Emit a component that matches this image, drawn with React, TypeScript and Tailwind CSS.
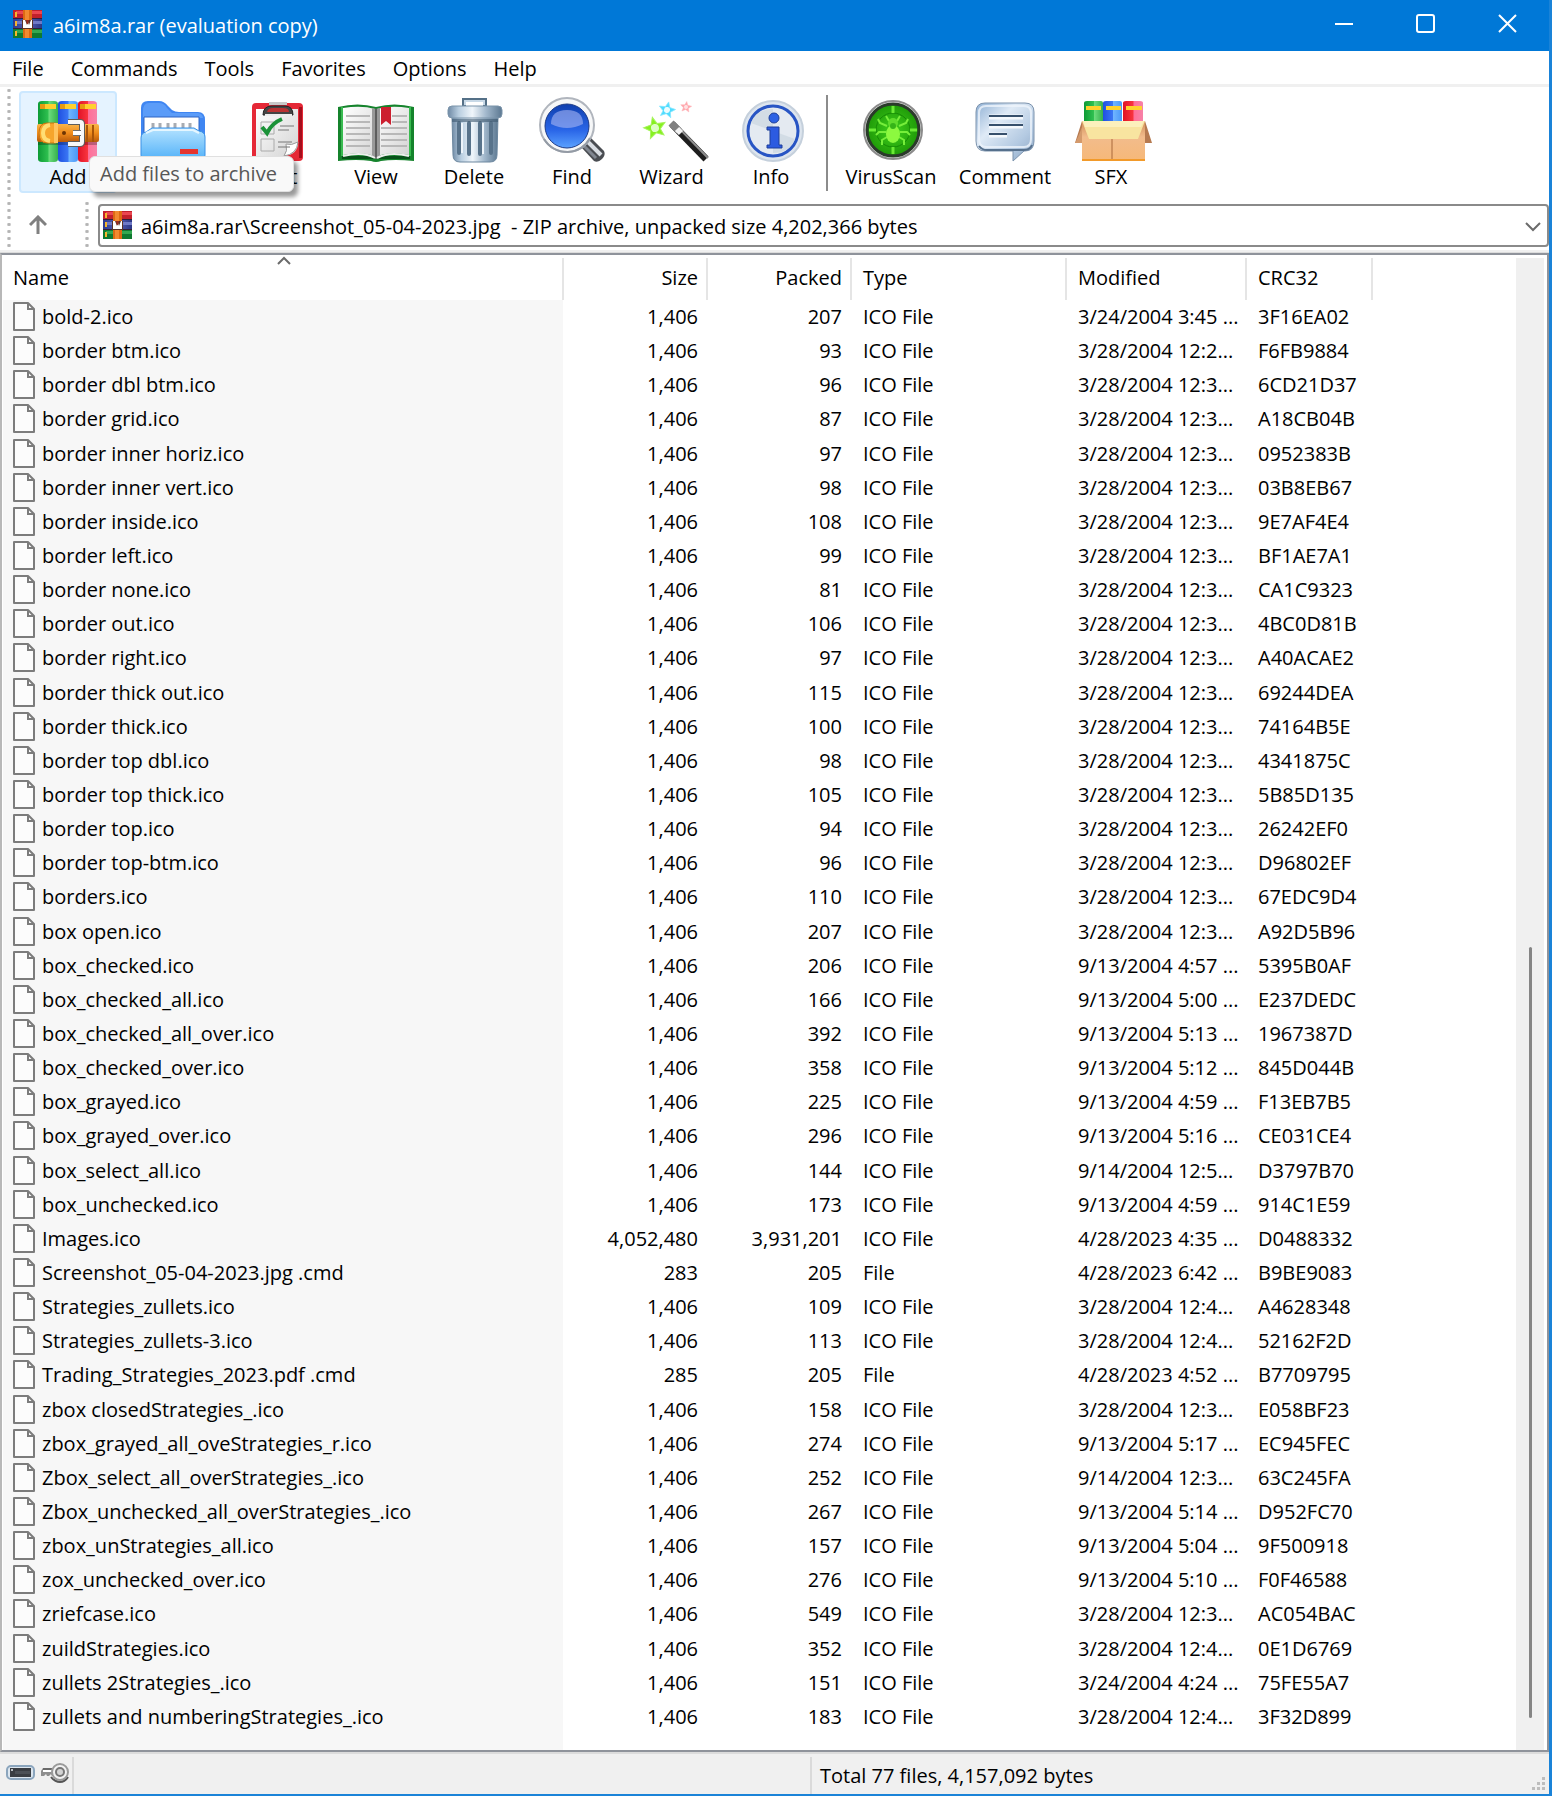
import { useState } from 'react';
import type { ReactNode } from 'react';

interface ArchiveFile {
  name: string;
  size: string;
  packed: string;
  type: string;
  modified: string;
  crc: string;
}

const ICO = 'ICO File';

const file = (
  name: string,
  packed: string,
  modified: string,
  crc: string,
  size = '1,406',
  type = ICO
): ArchiveFile => ({ name, size, packed, type, modified, crc });

const FILES: ArchiveFile[] = [
  file('bold-2.ico', '207', '3/24/2004 3:45 ...', '3F16EA02'),
  file('border btm.ico', '93', '3/28/2004 12:2...', 'F6FB9884'),
  file('border dbl btm.ico', '96', '3/28/2004 12:3...', '6CD21D37'),
  file('border grid.ico', '87', '3/28/2004 12:3...', 'A18CB04B'),
  file('border inner horiz.ico', '97', '3/28/2004 12:3...', '0952383B'),
  file('border inner vert.ico', '98', '3/28/2004 12:3...', '03B8EB67'),
  file('border inside.ico', '108', '3/28/2004 12:3...', '9E7AF4E4'),
  file('border left.ico', '99', '3/28/2004 12:3...', 'BF1AE7A1'),
  file('border none.ico', '81', '3/28/2004 12:3...', 'CA1C9323'),
  file('border out.ico', '106', '3/28/2004 12:3...', '4BC0D81B'),
  file('border right.ico', '97', '3/28/2004 12:3...', 'A40ACAE2'),
  file('border thick out.ico', '115', '3/28/2004 12:3...', '69244DEA'),
  file('border thick.ico', '100', '3/28/2004 12:3...', '74164B5E'),
  file('border top dbl.ico', '98', '3/28/2004 12:3...', '4341875C'),
  file('border top thick.ico', '105', '3/28/2004 12:3...', '5B85D135'),
  file('border top.ico', '94', '3/28/2004 12:3...', '26242EF0'),
  file('border top-btm.ico', '96', '3/28/2004 12:3...', 'D96802EF'),
  file('borders.ico', '110', '3/28/2004 12:3...', '67EDC9D4'),
  file('box open.ico', '207', '3/28/2004 12:3...', 'A92D5B96'),
  file('box_checked.ico', '206', '9/13/2004 4:57 ...', '5395B0AF'),
  file('box_checked_all.ico', '166', '9/13/2004 5:00 ...', 'E237DEDC'),
  file('box_checked_all_over.ico', '392', '9/13/2004 5:13 ...', '1967387D'),
  file('box_checked_over.ico', '358', '9/13/2004 5:12 ...', '845D044B'),
  file('box_grayed.ico', '225', '9/13/2004 4:59 ...', 'F13EB7B5'),
  file('box_grayed_over.ico', '296', '9/13/2004 5:16 ...', 'CE031CE4'),
  file('box_select_all.ico', '144', '9/14/2004 12:5...', 'D3797B70'),
  file('box_unchecked.ico', '173', '9/13/2004 4:59 ...', '914C1E59'),
  file('Images.ico', '3,931,201', '4/28/2023 4:35 ...', 'D0488332', '4,052,480'),
  file('Screenshot_05-04-2023.jpg .cmd', '205', '4/28/2023 6:42 ...', 'B9BE9083', '283', 'File'),
  file('Strategies_zullets.ico', '109', '3/28/2004 12:4...', 'A4628348'),
  file('Strategies_zullets-3.ico', '113', '3/28/2004 12:4...', '52162F2D'),
  file('Trading_Strategies_2023.pdf .cmd', '205', '4/28/2023 4:52 ...', 'B7709795', '285', 'File'),
  file('zbox closedStrategies_.ico', '158', '3/28/2004 12:3...', 'E058BF23'),
  file('zbox_grayed_all_oveStrategies_r.ico', '274', '9/13/2004 5:17 ...', 'EC945FEC'),
  file('Zbox_select_all_overStrategies_.ico', '252', '9/14/2004 12:3...', '63C245FA'),
  file('Zbox_unchecked_all_overStrategies_.ico', '267', '9/13/2004 5:14 ...', 'D952FC70'),
  file('zbox_unStrategies_all.ico', '157', '9/13/2004 5:04 ...', '9F500918'),
  file('zox_unchecked_over.ico', '276', '9/13/2004 5:10 ...', 'F0F46588'),
  file('zriefcase.ico', '549', '3/28/2004 12:3...', 'AC054BAC'),
  file('zuildStrategies.ico', '352', '3/28/2004 12:4...', '0E1D6769'),
  file('zullets 2Strategies_.ico', '151', '3/24/2004 4:24 ...', '75FE55A7'),
  file('zullets and numberingStrategies_.ico', '183', '3/28/2004 12:4...', '3F32D899'),
];

const MENU = ['File', 'Commands', 'Tools', 'Favorites', 'Options', 'Help'];

/* Gradients shared by all toolbar drawings */
function Gradients() {
  return (
    <svg width="0" height="0" className="absolute" aria-hidden="true">
      <defs>
        <linearGradient id="bookGreen">
          <stop offset="0" stopColor="#0d9a35" />
          <stop offset=".5" stopColor="#2fc050" />
          <stop offset=".55" stopColor="#6bdc7c" />
          <stop offset="1" stopColor="#35b04c" />
        </linearGradient>
        <linearGradient id="bookBlue">
          <stop offset="0" stopColor="#1f4fe0" />
          <stop offset=".5" stopColor="#3a76f4" />
          <stop offset=".55" stopColor="#6fb4ff" />
          <stop offset="1" stopColor="#4a98f8" />
        </linearGradient>
        <linearGradient id="bookRed">
          <stop offset="0" stopColor="#e01226" />
          <stop offset=".5" stopColor="#f8343e" />
          <stop offset=".55" stopColor="#ff6f98" />
          <stop offset="1" stopColor="#f782a8" />
        </linearGradient>
        <linearGradient id="belt" x1="0" y1="0" x2="0" y2="1">
          <stop offset="0" stopColor="#f9b54a" />
          <stop offset=".5" stopColor="#f08c1c" />
          <stop offset="1" stopColor="#b8590a" />
        </linearGradient>
        <linearGradient id="folderFront" x1="0" y1="0" x2="0" y2="1">
          <stop offset="0" stopColor="#b4e2ff" />
          <stop offset="1" stopColor="#4fb0f8" />
        </linearGradient>
        <linearGradient id="paper" x1="0" y1="0" x2="1" y2="1">
          <stop offset="0" stopColor="#ffffff" />
          <stop offset="1" stopColor="#d4d4d4" />
        </linearGradient>
        <linearGradient id="steel">
          <stop offset="0" stopColor="#6f8aa5" />
          <stop offset=".2" stopColor="#b9cee0" />
          <stop offset=".45" stopColor="#f0f6fb" />
          <stop offset=".7" stopColor="#a3b9cd" />
          <stop offset="1" stopColor="#5c7891" />
        </linearGradient>
        <linearGradient id="lens" x1="0" y1="0" x2="0" y2="1">
          <stop offset="0" stopColor="#0f3fae" />
          <stop offset=".6" stopColor="#2a66e8" />
          <stop offset="1" stopColor="#5ba2ff" />
        </linearGradient>
        <linearGradient id="bubble" x1="0" y1="0" x2="1" y2="1">
          <stop offset="0" stopColor="#8fb0d4" />
          <stop offset=".35" stopColor="#dfeaf6" />
          <stop offset=".7" stopColor="#b4cae2" />
          <stop offset="1" stopColor="#8ba5c2" />
        </linearGradient>
        <radialGradient id="virus">
          <stop offset="0" stopColor="#3fd01c" />
          <stop offset="1" stopColor="#1f9a08" />
        </radialGradient>
        <linearGradient id="cardboard" x1="0" y1="0" x2="0" y2="1">
          <stop offset="0" stopColor="#d08d58" />
          <stop offset=".4" stopColor="#f2bc8c" />
          <stop offset="1" stopColor="#f6b878" />
        </linearGradient>
        <linearGradient id="winBlue">
          <stop offset="0" stopColor="#2e3a8e" />
          <stop offset=".5" stopColor="#5560b8" />
          <stop offset="1" stopColor="#2b3684" />
        </linearGradient>
      </defs>
    </svg>
  );
}

function Drawing({ children }: { children: ReactNode }) {
  return (
    <svg width="76" height="64" viewBox="0 0 76 64" className="overflow-visible" aria-hidden="true">
      {children}
    </svg>
  );
}

function BooksIcon() {
  return (
    <Drawing>
      <path d="M8 5q0-3 4-3h12q4 0 4 3v55q0 3-4 3H12q-4 0-4-3z" fill="url(#bookGreen)" />
      <path d="M28 5q0-3 4-3h12q4 0 4 3v55q0 3-4 3H32q-4 0-4-3z" fill="url(#bookBlue)" />
      <path d="M48 5q0-3 4-3h11q4 0 4 3v55q0 3-4 3H52q-4 0-4-3z" fill="url(#bookRed)" />
      <path d="M10 5h16v5H10zM30 5h16v5H30zM50 5h16v5H50z" fill="#ffd02e" />
      <path d="M10 5h5v5h-5zM30 5h5v5h-5zM50 5h5v5h-5z" fill="#e89a10" />
      <path d="M8 43h20v3H8zM28 43h20v3H28zM48 43h19v3H48z" fill="#000" opacity=".25" />
      <rect x="7" y="25" width="62" height="18" rx="2" fill="url(#belt)" />
      <path d="M17 24q-8 0-8 10t8 10h9V24z" fill="#f6a52c" stroke="#c87410" />
      <path d="M20 26q-7 1-7 8t7 8" fill="none" stroke="#ffdd74" strokeWidth="4" />
      <path d="M24 24h4v20h-4z" fill="#ffc460" />
      <circle cx="34" cy="34" r="2" fill="#6d3504" />
      <path d="M38 23h12q2 0 2 2v18q0 2-2 2H38" fill="none" stroke="#5d5d5d" strokeWidth="6" />
      <path d="M38 23h12q2 0 2 2v18q0 2-2 2H38" fill="none" stroke="#f7f7f7" strokeWidth="4" />
      <path d="M43 34h8" stroke="#6e6e6e" strokeWidth="6" />
      <path d="M43 34h8" stroke="#fff" strokeWidth="4" />
      <path d="M57 26v17M63 26v17" stroke="#a85408" strokeWidth="2" />
    </Drawing>
  );
}

function FolderIcon() {
  return (
    <Drawing>
      <path d="M6 56V9q0-7 7-7h11q5 0 9 5l4 4q3 2 7 2h19q7 0 7 8v35z" fill="#3f86f2" />
      <path d="M8 12q0-8 6-8h10q5 0 8 5l5 5h26q5 1 5 5H8z" fill="#5b9cf8" />
      <path d="M9 18h55v26H9z" fill="#fff" stroke="#2e64c4" />
      <path d="M18 24v8M25 24v8M33 24v8M40 24v8M48 24v8M55 24v8" stroke="#a8acb2" strokeWidth="3" />
      <path d="M6 39q0-5 5-6l6-4h42l5 3q6 1 6 6v18q0 6-6 6H12q-6 0-6-6z" fill="url(#folderFront)" stroke="#3a91e6" />
      <path d="M11 34l7-3h40l6 3" fill="none" stroke="#e5f6ff" strokeWidth="2" />
      <path d="M45 50h18v5H45z" fill="#e5352f" />
    </Drawing>
  );
}

function ClipboardIcon() {
  return (
    <Drawing>
      <rect x="12" y="4" width="51" height="58" rx="4" fill="#e52836" />
      <path d="M59 8h3v51h-3z" fill="#a50e1c" />
      <path d="M16 10h42v33q0 13-14 14H16z" fill="url(#paper)" />
      <path d="M58 43q-7 4-12 2 2 7-2 12 13-2 14-14z" fill="#fff" stroke="#9a9a9a" />
      <path d="M23 16q0-9 9-9h13q8 0 8 9z" fill="#444" stroke="#222" />
      <path d="M27 13q1-4 6-4h10q6 0 6 4z" fill="#b33" />
      <path d="M29 3h18v3H29z" fill="#c8c8c8" />
      <path d="M25 16h27" stroke="#eee" strokeWidth="2" />
      <path d="M21 23h13v12H21zM21 40h13v12H21z" fill="none" stroke="#aaa" />
      <path d="M22 28l5 6q5-10 15-14" fill="none" stroke="#1b9238" strokeWidth="4" />
      <path d="M40 27h14M38 31h11M38 43h14M38 48h12" stroke="#777" />
    </Drawing>
  );
}

function BookIcon() {
  return (
    <Drawing>
      <path d="M0 8q20-5 38 0 18-5 38 0v54q-20-2-33 0-5 2-10 0-14-2-33 0z" fill="#15832c" />
      <path d="M3 8h2v49H3zM71 8h2v49h-2z" fill="#39ba50" />
      <path d="M4 57h68v3H4z" fill="#075219" />
      <path d="M5 9q19-3 32 1v47Q23 52 5 56z" fill="url(#paper)" />
      <path d="M39 10q14-4 32-1v47q-18-4-32 1z" fill="url(#paper)" />
      <path d="M34 9l4 1 4-1v48l-4 3-4-3z" fill="#999" />
      <path d="M38 10v49" stroke="#222" />
      <path d="M5 57q20-5 32 2M39 59q13-7 32-2" fill="none" stroke="#eee" strokeWidth="2" />
      <path
        d="M8 17h24M8 23h24M8 29h24M8 35h24M8 41h24M8 47h24M54 17h15M54 23h15M43 29h26M43 35h26M43 41h26M43 47h26"
        stroke="#b8b8b8"
        strokeWidth="2"
      />
      <path d="M43 8h10v18l-5-4-5 4z" fill="#cc1f2f" />
    </Drawing>
  );
}

function TrashIcon() {
  return (
    <Drawing>
      <path d="M28 8V1h21v7" fill="none" stroke="#547087" strokeWidth="4" />
      <path d="M29 6V2h19v4" fill="none" stroke="#c8d9e7" strokeWidth="2" />
      <path d="M16 18h46l-1 38q0 7-7 7H24q-7 0-7-7z" fill="url(#steel)" stroke="#6c879f" />
      <path d="M23 24v30M33 24v31M44 24v31M55 24v30" stroke="#58738b" strokeWidth="4" strokeLinecap="round" />
      <path d="M26 24v30M36 24v31M47 24v31" stroke="#edf4fa" strokeWidth="2" />
      <rect x="12" y="7" width="54" height="12" rx="4" fill="url(#steel)" stroke="#7b94aa" />
      <path d="M16 20h46v3H16z" fill="#3e586f" opacity=".6" />
    </Drawing>
  );
}

function FindIcon() {
  return (
    <Drawing>
      <path d="M50 43l6-5 14 14q2 4-2 8t-8 2L48 49z" fill="#4a4d52" />
      <path d="M53 42l14 14" stroke="#d8dce2" strokeWidth="4" />
      <path d="M50 47l12 12" stroke="#808690" strokeWidth="3" />
      <circle cx="33" cy="26" r="27" fill="#f6f7f8" stroke="#b0b5bd" strokeWidth="2" />
      <path d="M10 40q8 13 24 13 15-1 22-14" fill="none" stroke="#949ba5" strokeWidth="2" />
      <circle cx="33" cy="27" r="22" fill="url(#lens)" stroke="#1c3a86" />
      <path d="M17 25q0-14 16-14t16 14q-16 8-32 0z" fill="#a7b6f4" opacity=".6" />
    </Drawing>
  );
}

const STAR = 'M0-11L3-4 11-3 5 2 7 9 0 5-7 9-5 2-11-3-3-4z';

function WizardIcon() {
  return (
    <Drawing>
      <g transform="translate(21 29) rotate(-14)">
        <path d={STAR} fill="#86f020" stroke="#a6f45c" />
        <circle r="4" fill="#dcffc4" />
      </g>
      <g transform="translate(33 11) rotate(12) scale(.75)">
        <path d={STAR} fill="#4fdcff" stroke="#8ae8ff" />
        <circle r="4" fill="#ecfdff" />
      </g>
      <g transform="translate(52 8) rotate(8) scale(.5)">
        <path d={STAR} fill="#ffa6ac" stroke="#ffb4b8" />
        <circle r="4" fill="#ffe2e4" />
      </g>
      <path d="M38 25l34 35" stroke="#1e1e1e" strokeWidth="7" />
      <path d="M41 25l33 34" stroke="#8f8f8f" strokeWidth="2" />
      <path d="M37 24l8 8" stroke="#808080" strokeWidth="7" />
      <path d="M43 30l4 4" stroke="#f2f2f2" strokeWidth="6" />
    </Drawing>
  );
}

function InfoIcon() {
  return (
    <Drawing>
      <circle cx="40" cy="32" r="30" fill="#dde5ee" stroke="#c5d0dc" strokeWidth="2" />
      <circle cx="40" cy="32" r="25" fill="#e4eaf1" stroke="#2855c4" strokeWidth="3" />
      <path d="M40 32L18 24q5-14 22-14zM40 32l22 8q-5 14-22 14z" fill="#cbd5e0" opacity=".7" />
      <circle cx="41" cy="19" r="5" fill="#2c62e4" stroke="#1c3f9a" />
      <path d="M34 28h12v18h3v3H34v-3h3V31h-3z" fill="#2c5be0" stroke="#1c3f9a" />
    </Drawing>
  );
}

function VirusIcon() {
  return (
    <Drawing>
      <circle cx="40" cy="31" r="29" fill="#e8e8e8" stroke="#8b8b8b" strokeWidth="2" />
      <circle cx="40" cy="31" r="26" fill="url(#virus)" stroke="#2b3a2b" strokeWidth="3" />
      <circle cx="40" cy="31" r="17" fill="none" stroke="#158a05" />
      <path d="M40 7v7M40 48v7M16 31h7M57 31h7" stroke="#6bea35" strokeWidth="3" />
      <path
        d="M34 27l-7-3-2-4M33 33h-7l-3 3M34 38l-5 3v5M46 27l7-3 2-4M47 33h7l3 3M46 38l5 3v5M36 22l-3-5M44 22l3-5"
        fill="none"
        stroke="#76ee3a"
        strokeWidth="2"
      />
      <circle cx="40" cy="24" r="5" fill="#5fdc2c" />
      <ellipse cx="40" cy="35" rx="7" ry="9" fill="#8cf93f" />
      <circle cx="40" cy="27" r="3" fill="#35b418" />
    </Drawing>
  );
}

function CommentIcon() {
  return (
    <Drawing>
      <path d="M18 4h40q9 0 9 9v29q0 10-9 10h-1L46 62V52H18q-9 0-9-10V13q0-9 9-9z" fill="url(#bubble)" stroke="#7c93ad" />
      <path d="M19 7h38q7 0 7 7v26q0 8-7 8H19q-7 0-7-8V14q0-7 7-7z" fill="none" stroke="#edf4fb" strokeWidth="2" opacity=".8" />
      <path d="M12 47q3 4 8 4h37q6 0 8-5" fill="none" stroke="#56708c" strokeWidth="2" />
      <path d="M22 18h34M22 27h34M22 36h18" stroke="#f4f8fc" strokeWidth="5" />
      <path d="M22 17h34M22 26h34M22 35h18" stroke="#37506c" strokeWidth="2" />
    </Drawing>
  );
}

function SfxIcon() {
  return (
    <Drawing>
      <path d="M11 4q0-2 3-2h14q2 0 2 2v20H11z" fill="url(#bookGreen)" />
      <path d="M30 4q0-2 3-2h14q2 0 2 2v20H30z" fill="url(#bookBlue)" />
      <path d="M50 4q0-2 3-2h14q3 0 3 2v20H50z" fill="url(#bookRed)" />
      <path d="M13 7h15v4H13zM33 7h15v4H33zM53 7h16v4H53z" fill="#ffd22c" />
      <path d="M9 22L2 44h8zM72 22l7 22h-7z" fill="#b67a50" />
      <path d="M5 38l4-10v16H2z" fill="#d49a6c" />
      <path d="M9 22h63v40H9z" fill="url(#cardboard)" />
      <path d="M9 22l7 18h49l7-18z" fill="#f8e4a0" />
      <path d="M10 22h61l-3 6H12z" fill="#fcf0bc" />
      <path d="M39 40v22" stroke="#a9683a" />
      <path d="M9 60h63v2H9z" fill="#f29a2a" />
    </Drawing>
  );
}

function RarIcon() {
  return (
    <svg width="29" height="28" viewBox="0 0 29 28" className="shrink-0" aria-hidden="true">
      <path d="M0 0h29v9H0z" fill="#c2202c" />
      <path d="M0 9h29v10H0z" fill="url(#winBlue)" />
      <path d="M0 19h29v9H0z" fill="#0f7a30" />
      <path d="M3 1h26v3H3z" fill="#ea4650" />
      <path d="M3 11h26v3H3z" fill="#6f79c6" />
      <path d="M3 20h26v3H3z" fill="#34a850" />
      <path d="M0 8h29v1H0zM0 18h29v1H0z" fill="#33203a" />
      <path d="M2 2h2v5H2zM2 11h2v5H2zM2 21h2v5H2z" fill="#f7b52c" />
      <path d="M10 0h9v28h-9z" fill="#dd6a13" />
      <path d="M12 0h4v28h-4z" fill="#f28a30" />
      <path d="M9 10h11v9H9z" fill="#5a3428" />
      <path d="M10 10h2l2 5 1-3 1 3 2-5h1v8h-9z" fill="#fff" />
      <path d="M13 10h3l-1 4h-1z" fill="#a02c20" />
    </svg>
  );
}

function PageIcon() {
  return (
    <svg width="22" height="30" viewBox="0 0 22 30" className="shrink-0" aria-hidden="true">
      <path d="M1 1h14l6 6v21H1z" fill="#fcfcfc" stroke="#7c7c7c" strokeWidth="2" strokeLinejoin="round" />
      <path d="M15 1v6h6" fill="none" stroke="#7c7c7c" strokeWidth="2" />
    </svg>
  );
}

function DiskIcon() {
  return (
    <svg width="29" height="15" viewBox="0 0 29 15" aria-hidden="true">
      <rect x="1" y="1" width="27" height="13" rx="4" fill="#dce6ef" stroke="#8ba5bd" strokeWidth="2" />
      <path d="M4 3h21v9H4z" fill="#3a3d42" />
      <path d="M9 6h15v3H9z" fill="#4c5056" />
      <circle cx="6" cy="5" r="1" fill="#e8edf2" />
    </svg>
  );
}

function KeyIcon() {
  return (
    <svg width="30" height="20" viewBox="0 0 30 20" aria-hidden="true">
      <path d="M3 5h12v8h-3l-1-2-2 2H7l-1-2-2 2H1V8z" fill="#8e8e8e" />
      <path d="M3 6h12" stroke="#6a6a6a" strokeWidth="2" />
      <path d="M3 8h12" stroke="#fff" strokeWidth="2" />
      <path d="M11 14q4 5 9 5t8-5" fill="none" stroke="#555" strokeWidth="2" />
      <circle cx="20" cy="9" r="8" fill="#f2f2f2" stroke="#9a9a9a" strokeWidth="2" />
      <circle cx="20" cy="9" r="4" fill="#d4d4d4" stroke="#777" strokeWidth="2" />
    </svg>
  );
}

interface ToolProps {
  label: string;
  icon: ReactNode;
  width?: string;
  active?: boolean;
}

function Tool({ label, icon, width = 'w-[98px]', active }: ToolProps) {
  return (
    <button
      className={`flex h-[102px] shrink-0 flex-col items-center rounded-sm border-2 pt-[6px] leading-7 ${width} ${
        active ? 'border-[#cce8ff] bg-[#e5f3ff]' : 'border-transparent hover:bg-[#e5f3ff]'
      }`}
    >
      {icon}
      <span className="whitespace-nowrap">{label}</span>
    </button>
  );
}

/* Dotted grip at the left of a toolbar band */
function Grip() {
  return (
    <div className="w-1 shrink-0 self-stretch bg-[radial-gradient(circle,#b4b4b4_1px,#e6e6e6_2px,transparent_2px)] bg-[size:4px_7px]" />
  );
}

function TitleBar() {
  return (
    <header className="flex h-[51px] items-center bg-[#0078d7] pb-1 text-white">
      <div className="flex flex-1 items-center gap-[11px] pl-[13px]">
        <RarIcon />
        <h1 className="pt-1">a6im8a.rar (evaluation copy)</h1>
      </div>
      <button aria-label="Minimize" className="flex h-10 w-[82px] items-center justify-center">
        <svg width="20" height="20" viewBox="0 0 20 20">
          <path d="M1 10h18" stroke="#fff" strokeWidth="2" />
        </svg>
      </button>
      <button aria-label="Maximize" className="flex h-10 w-[82px] items-center justify-center">
        <svg width="20" height="20" viewBox="0 0 20 20" fill="none">
          <rect x="1" y="1" width="17" height="17" rx="2" stroke="#fff" strokeWidth="2" />
        </svg>
      </button>
      <button aria-label="Close" className="flex h-10 w-[82px] items-center justify-center">
        <svg width="20" height="20" viewBox="0 0 20 20">
          <path d="M1 1l17 17M18 1L1 18" stroke="#fff" strokeWidth="2" />
        </svg>
      </button>
    </header>
  );
}

function Toolbar() {
  return (
    <div className="relative flex h-[113px] items-start pl-[7px]">
      <Grip />
      <div className="flex items-start pt-1 pl-2">
        <Tool label="Add" icon={<BooksIcon />} active />
        <Tool label="Extract To" icon={<FolderIcon />} width="w-[112px]" />
        <Tool label="Test" icon={<ClipboardIcon />} />
        <Tool label="View" icon={<BookIcon />} />
        <Tool label="Delete" icon={<TrashIcon />} />
        <Tool label="Find" icon={<FindIcon />} />
        <Tool label="Wizard" icon={<WizardIcon />} width="w-[101px]" />
        <Tool label="Info" icon={<InfoIcon />} />
        <div className="mx-[6px] mt-1 h-24 w-[2px] bg-[#8c8c8c]" />
        <Tool label="VirusScan" icon={<VirusIcon />} width="w-[114px]" />
        <Tool label="Comment" icon={<CommentIcon />} width="w-[114px]" />
        <Tool label="SFX" icon={<SfxIcon />} />
      </div>
      <div
        role="tooltip"
        className="absolute top-[69px] left-[89px] rounded-md border border-[#e0e0e0] bg-[#f9f9f9] pt-[3px] pr-4 pb-[3px] pl-[10px] leading-7 whitespace-nowrap text-[#575757] shadow-[4px_5px_4px_rgba(0,0,0,0.4)]"
      >
        Add files to archive
      </div>
    </div>
  );
}

function AddressBar() {
  const [path, setPath] = useState('a6im8a.rar\\Screenshot_05-04-2023.jpg  - ZIP archive, unpacked size 4,202,366 bytes');

  return (
    <div className="flex h-[50px] items-center pl-[7px]">
      <Grip />
      <button aria-label="Up one level" className="flex w-[74px] justify-center pr-[20px]">
        <svg width="18" height="20" viewBox="0 0 18 20" fill="none" stroke="#808080" strokeWidth="3">
          <path d="M9 19V2M1 10l8-8 8 8" />
        </svg>
      </button>
      <Grip />
      <div className="ml-[9px] flex h-[43px] flex-1 items-center rounded-sm border-2 border-[#8a8a8a] bg-white pl-[3px]">
        <RarIcon />
        <input
          aria-label="Archive path"
          value={path}
          onChange={(e) => setPath(e.target.value)}
          className="ml-[9px] min-w-0 flex-1 bg-transparent pt-[3px] outline-none"
        />
        <button aria-label="Show path list" className="px-[6px] pt-[3px]">
          <svg width="16" height="10" viewBox="0 0 16 10" fill="none" stroke="#6b6b6b" strokeWidth="2">
            <path d="M1 1l7 7 7-7" />
          </svg>
        </button>
      </div>
    </div>
  );
}

function HeaderCell({ label, className = '' }: { label: string; className?: string }) {
  return (
    <th scope="col" className={`h-[42px] border-r-2 border-[#e5e5e5] p-0 pb-[2px] font-normal ${className}`}>
      {label}
    </th>
  );
}

function FileList() {
  return (
    <main className="relative flex flex-1 border-2 border-[#8f939b] border-l-[#b8b8b8] bg-white pt-[3px] pr-[3px] pl-px">
      <div className="flex min-w-0 flex-1">
        <table className="w-full table-fixed border-collapse leading-7">
          <colgroup>
            <col className="w-[560px]" />
            <col className="w-[144px]" />
            <col className="w-[144px]" />
            <col className="w-[215px]" />
            <col className="w-[180px]" />
            <col className="w-[126px]" />
            <col />
          </colgroup>
          <thead>
            <tr>
              <HeaderCell label="Name" className="pl-[10px] text-left" />
              <HeaderCell label="Size" className="pr-[8px] text-right" />
              <HeaderCell label="Packed" className="pr-[8px] text-right" />
              <HeaderCell label="Type" className="pl-[11px] text-left" />
              <HeaderCell label="Modified" className="pl-[11px] text-left" />
              <HeaderCell label="CRC32" className="pl-[11px] text-left" />
              <td />
            </tr>
          </thead>
          <tbody>
            {FILES.map((f) => (
              <tr key={f.name} className="whitespace-nowrap">
                <td className="bg-[#f7f7f7] p-0 pl-[10px]">
                  <span className="flex items-center gap-[7px]">
                    <PageIcon />
                    {f.name}
                  </span>
                </td>
                <td className="p-0 pr-[9px] text-right">{f.size}</td>
                <td className="p-0 pr-[9px] text-right">{f.packed}</td>
                <td className="p-0 pl-[12px]">{f.type}</td>
                <td className="p-0 pl-[12px]">{f.modified}</td>
                <td className="p-0 pl-[12px]">{f.crc}</td>
                <td className="p-0" />
              </tr>
            ))}
          </tbody>
          <tfoot>
            <tr>
              <td className="h-4 bg-[#f7f7f7] p-0" />
            </tr>
          </tfoot>
        </table>
      </div>
      <div className="flex w-[28px] shrink-0 flex-col items-center bg-[#f0f0f0] pb-[32px]">
        <div className="flex-[689]" />
        <div className="w-[3px] flex-[770] rounded-full bg-[#858585]" />
      </div>
      <svg width="14" height="9" viewBox="0 0 14 9" className="absolute top-px left-[275px]" fill="none" stroke="#6b6b6b" strokeWidth="2">
        <path d="M1 8l6-6 6 6" />
      </svg>
    </main>
  );
}

function StatusBar() {
  return (
    <footer className="flex h-[42px] items-stretch border-t-2 border-[#dcdcdc] bg-[#f0f0f0] pt-[3px]">
      <div className="flex w-[74px] items-center gap-[5px] border-r-2 border-[#dadada] pb-[6px] pl-[6px]">
        <DiskIcon />
        <KeyIcon />
      </div>
      <div className="w-[738px] border-r-2 border-[#dadada]" />
      <p className="flex flex-1 items-center pl-[8px]">Total 77 files, 4,157,092 bytes</p>
      <svg width="16" height="16" viewBox="0 0 16 16" className="mr-[2px] mb-[2px] self-end" fill="#bdbdbd" aria-hidden="true">
        <path d="M11 1h3v3h-3zM11 6h3v3h-3zM11 11h3v3h-3zM6 6h3v3H6zM6 11h3v3H6zM1 11h3v3H1z" />
      </svg>
    </footer>
  );
}

export default function App() {
  return (
    <div className="flex min-h-screen flex-col border-r-[3px] border-b-2 border-[#1a83d8] bg-white font-['Open_Sans','Noto_Sans',sans-serif] text-[20px] text-black">
      <Gradients />
      <TitleBar />
      <nav className="flex h-[36px] items-center gap-[27px] border-b-[3px] border-[#f0f0f0] pt-[2px] pl-[12px]">
        {MENU.map((item) => (
          <button key={item}>{item}</button>
        ))}
      </nav>
      <Toolbar />
      <AddressBar />
      <div className="h-[3px] border-b border-[#dcdcdc] bg-[#f0f0f0]" />
      <FileList />
      <StatusBar />
    </div>
  );
}
